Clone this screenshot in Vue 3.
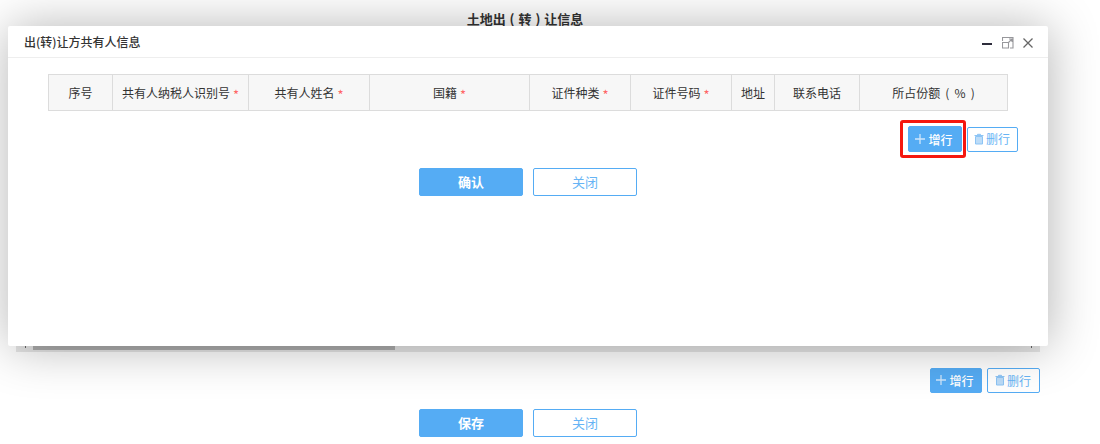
<script setup>
const columns = [
  { label: '序号', width: 64 },
  { label: '共有人纳税人识别号', width: 136, required: true },
  { label: '共有人姓名', width: 121, required: true },
  { label: '国籍', width: 160, required: true },
  { label: '证件种类', width: 101, required: true },
  { label: '证件号码', width: 101, required: true },
  { label: '地址', width: 43 },
  { label: '联系电话', width: 85 },
  { label: '所占份额 ( % )', width: 149, wide: true },
]
</script>

<template>
  <div class="page">
    <h1 class="page-title">土地出 ( 转 ) 让信息</h1>
    <div class="scroll-area">
      <div class="scrollbar">
        <div class="thumb"></div>
        <i class="tick left"></i>
        <i class="tick right"></i>
      </div>
    </div>
    <div class="row-actions outer">
      <button class="btn small primary">
        <svg class="plus" viewBox="0 0 10 10"><path d="M5 0v10M0 5h10" stroke="#cfe6fb" stroke-width="1.300"/></svg>增行
      </button>
      <button class="btn small ghost">
        <svg class="trash" viewBox="0 0 12 12"><path d="M1.500 2.500h9M4.500 2.500V1.300h3v1.200M2.500 3.500h7v7.500h-7z" fill="#bcdcf8" stroke="#8cc4f5" stroke-width="1"/></svg>删行
      </button>
    </div>
    <div class="form-actions outer-form">
      <button class="btn wide primary">保存</button>
      <button class="btn wide ghost">关闭</button>
    </div>

    <section class="modal">
      <header class="modal-head">
        <span class="modal-title">出(转)让方共有人信息</span>
        <div class="win-icons">
          <svg width="12" height="12" viewBox="0 0 12 12"><path d="M0 7h10" stroke="#2e2d3c" stroke-width="2"/></svg>
          <svg width="12" height="12" viewBox="0 0 12 12"><path d="M.5 4V.5h10.500v10.500H8M.5 5.500h6v5.500h-6zM6.500 5.500l3.500-3.500M7 2h3v3" fill="none" stroke="#97979b" stroke-width="1.100"/></svg>
          <svg width="12" height="12" viewBox="0 0 12 12"><path d="M1.500 1.500l9 9M10.500 1.500l-9 9" stroke="#666" stroke-width="1.300"/></svg>
        </div>
      </header>
      <div class="modal-body">
        <div class="table">
          <div v-for="c in columns" :key="c.label" class="cell" :class="{ spaced: c.wide }" :style="{ width: c.width + 'px' }">
            {{ c.label }}<span v-if="c.required" class="req">*</span>
          </div>
        </div>
        <div class="row-actions inner">
          <div class="highlight">
            <button class="btn small primary tall">
              <svg class="plus" viewBox="0 0 10 10"><path d="M5 0v10M0 5h10" stroke="#cfe6fb" stroke-width="1.300"/></svg>增行
            </button>
          </div>
          <button class="btn small ghost">
            <svg class="trash" viewBox="0 0 12 12"><path d="M1.500 2.500h9M4.500 2.500V1.300h3v1.200M2.500 3.500h7v7.500h-7z" fill="#bcdcf8" stroke="#8cc4f5" stroke-width="1"/></svg>删行
          </button>
        </div>
        <div class="form-actions inner-form">
          <button class="btn wide primary">确认</button>
          <button class="btn wide ghost">关闭</button>
        </div>
      </div>
    </section>
  </div>
</template>

<style>
html, body { background: #fff; }
</style>

<style scoped>
.page {
  position: relative;
  width: 1100px;
  height: 444px;
  overflow: hidden;
  font-family: "Noto Sans CJK SC", "Liberation Sans", sans-serif;
  font-size: 12px;
  color: #333;
  background: #fff;
}
.page-title {
  margin: 0;
  padding-top: 11px;
  height: 15px;
  line-height: 15px;
  width: 1050px;
  text-align: center;
  font-size: 13px;
  font-weight: 700;
  word-spacing: 1px;
  color: #333;
}
.scroll-area {
  margin: 0 60px 0 16px;
  height: 326px;
  display: flex;
  align-items: flex-end;
}
.scrollbar {
  position: relative;
  width: 100%;
  height: 6px;
  padding: 0 0 2px 17px;
  box-sizing: border-box;
  background: #e6e6e6;
}
.thumb { width: 362px; height: 4px; background: #adadad; }
.tick { position: absolute; top: 0; width: 1px; height: 2px; background: #666; }
.tick.left { left: 9px; }
.tick.right { right: 8px; }
.row-actions { display: flex; align-items: center; justify-content: flex-end; }
.outer { margin: 16px 60px 0 0; gap: 5px; }
.outer .ghost { width: 53px; }
.form-actions { display: flex; justify-content: flex-start; gap: 10px; }
.outer-form { margin: 16px 0 0 419px; }
.btn {
  box-sizing: border-box;
  border-radius: 2px;
  border: 1px solid #55acf4;
  font-family: inherit;
  font-size: 12px;
  padding: 0;
  display: flex;
  align-items: center;
  justify-content: center;
}
.primary { background: #55acf4; color: #fff; font-weight: 500; }
.ghost { background: #fff; color: #66b4f5; }
.small { width: 52px; height: 25px; padding: 0 2px 1px 0; }
.inner .ghost { width: 51px; }
.tall { width: 54px; height: 26px; padding: 0 2px 0 0; }
.wide { width: 104px; height: 28px; font-size: 13px; padding-bottom: 2px; }
.wide.primary { font-weight: 700; }
.plus { width: 10px; height: 10px; margin-right: 3px; }
.trash { width: 12px; height: 12px; margin-right: 1px; }
.modal {
  position: absolute;
  left: 8px;
  top: 26px;
  width: 1040px;
  height: 320px;
  background: #fff;
  border-radius: 2px;
  box-shadow: 1px 1px 50px rgba(0, 0, 0, 0.3);
}
.modal-head {
  box-sizing: border-box;
  height: 32px;
  border-bottom: 1px solid #eee;
  padding: 0 14px 0 16px;
  display: flex;
  align-items: center;
  justify-content: space-between;
}
.modal-title { font-size: 12px; font-weight: 500; color: #333; line-height: 32px; }
.win-icons { display: flex; gap: 8px; align-items: center; margin-top: 3px; }
.modal-body { padding: 16px 30px 0 40px; }
.table {
  display: flex;
  width: 960px;
  height: 37px;
  box-sizing: border-box;
  border: 1px solid #dcdcdc;
  background: #f7f7f7;
}
.cell {
  box-sizing: border-box;
  border-right: 1px solid #dcdcdc;
  display: flex;
  align-items: center;
  justify-content: center;
  white-space: pre;
  color: #333;
  flex: none;
  padding-bottom: 1px;
}
.cell:last-child { border-right: 0; flex: 1; }
.spaced { word-spacing: 2.500px; }
.req { color: #f66; margin-left: 3px; font-size: 13px; line-height: 1; padding-top: 4px; }
.inner { gap: 1px; margin: 9px 0 0 0; }
.highlight {
  box-sizing: border-box;
  width: 66px;
  height: 38px;
  padding-right: 1px;
  border: 3px solid #f5170f;
  border-radius: 3px;
  display: flex;
  align-items: center;
  justify-content: flex-end;
}
.inner-form { margin: 10px 0 0 371px; }
</style>
